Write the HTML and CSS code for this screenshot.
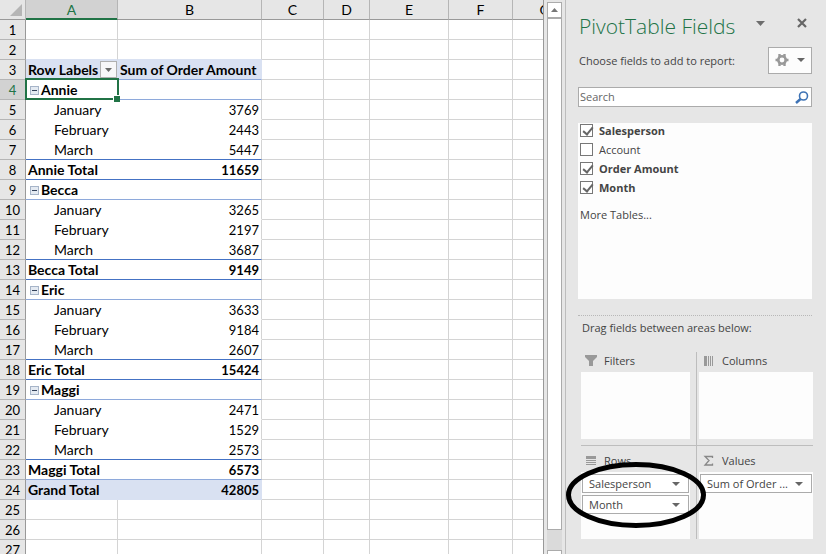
FILE: index.html
```html
<!DOCTYPE html>
<html lang="en">
<head>
<meta charset="utf-8">
<title>PivotTable Fields</title>
<link rel="stylesheet" href="styles.css">
</head>
<body>
<div class="app">
  <main class="sheet">
    <table class="grid">
      <colgroup>
        <col class="c-num"><col class="c-a"><col class="c-b"><col class="c-c"><col class="c-d"><col class="c-e"><col class="c-f"><col class="c-g">
      </colgroup>
      <thead>
        <tr>
          <th class="corner"><svg width="12" height="12" viewBox="0 0 12 12"><path d="M12 0V12H0Z" fill="#b5b5b5"/></svg></th>
          <th class="active">A</th><th>B</th><th>C</th><th>D</th><th>E</th><th>F</th><th>G</th>
        </tr>
      </thead>
      <tbody>
        <tr><th>1</th><td></td><td></td><td></td><td></td><td></td><td></td><td></td></tr>
        <tr class="above-head"><th>2</th><td></td><td></td><td></td><td></td><td></td><td></td><td></td></tr>
        <tr class="head"><th>3</th><td><div class="label-cell">Row Labels <button class="filter" aria-label="Filter row labels"><svg width="7" height="4" viewBox="0 0 7 4"><path d="M0 0H7L3.5 4Z" fill="#6b6b6b"/></svg></button></div></td><td>Sum of Order Amount</td><td></td><td></td><td></td><td></td><td></td></tr>
        <tr class="group"><th class="active">4</th><td class="selected"><button class="toggle" aria-label="Collapse"></button>Annie</td><td></td><td></td><td></td><td></td><td></td><td></td></tr>
        <tr class="item"><th>5</th><td>January</td><td>3769</td><td></td><td></td><td></td><td></td><td></td></tr>
        <tr class="item"><th>6</th><td>February</td><td>2443</td><td></td><td></td><td></td><td></td><td></td></tr>
        <tr class="item last"><th>7</th><td>March</td><td>5447</td><td></td><td></td><td></td><td></td><td></td></tr>
        <tr class="total"><th>8</th><td>Annie Total</td><td>11659</td><td></td><td></td><td></td><td></td><td></td></tr>
        <tr class="group"><th>9</th><td><button class="toggle" aria-label="Collapse"></button>Becca</td><td></td><td></td><td></td><td></td><td></td><td></td></tr>
        <tr class="item"><th>10</th><td>January</td><td>3265</td><td></td><td></td><td></td><td></td><td></td></tr>
        <tr class="item"><th>11</th><td>February</td><td>2197</td><td></td><td></td><td></td><td></td><td></td></tr>
        <tr class="item last"><th>12</th><td>March</td><td>3687</td><td></td><td></td><td></td><td></td><td></td></tr>
        <tr class="total"><th>13</th><td>Becca Total</td><td>9149</td><td></td><td></td><td></td><td></td><td></td></tr>
        <tr class="group"><th>14</th><td><button class="toggle" aria-label="Collapse"></button>Eric</td><td></td><td></td><td></td><td></td><td></td><td></td></tr>
        <tr class="item"><th>15</th><td>January</td><td>3633</td><td></td><td></td><td></td><td></td><td></td></tr>
        <tr class="item"><th>16</th><td>February</td><td>9184</td><td></td><td></td><td></td><td></td><td></td></tr>
        <tr class="item last"><th>17</th><td>March</td><td>2607</td><td></td><td></td><td></td><td></td><td></td></tr>
        <tr class="total"><th>18</th><td>Eric Total</td><td>15424</td><td></td><td></td><td></td><td></td><td></td></tr>
        <tr class="group"><th>19</th><td><button class="toggle" aria-label="Collapse"></button>Maggi</td><td></td><td></td><td></td><td></td><td></td><td></td></tr>
        <tr class="item"><th>20</th><td>January</td><td>2471</td><td></td><td></td><td></td><td></td><td></td></tr>
        <tr class="item"><th>21</th><td>February</td><td>1529</td><td></td><td></td><td></td><td></td><td></td></tr>
        <tr class="item last"><th>22</th><td>March</td><td>2573</td><td></td><td></td><td></td><td></td><td></td></tr>
        <tr class="total before-grand"><th>23</th><td>Maggi Total</td><td>6573</td><td></td><td></td><td></td><td></td><td></td></tr>
        <tr class="grand"><th>24</th><td>Grand Total</td><td>42805</td><td></td><td></td><td></td><td></td><td></td></tr>
        <tr><th>25</th><td></td><td></td><td></td><td></td><td></td><td></td><td></td></tr>
        <tr><th>26</th><td></td><td></td><td></td><td></td><td></td><td></td><td></td></tr>
        <tr><th>27</th><td></td><td></td><td></td><td></td><td></td><td></td><td></td></tr>
      </tbody>
    </table>
  </main>

  <div class="scroll">
    <button class="scroll-up" aria-label="Scroll up"><svg width="7" height="4" viewBox="0 0 7 4"><path d="M0 4L3.5 0L7 4Z" fill="#777"/></svg></button>
    <div class="thumb"></div>
    <div class="track"></div>
    <div class="scroll-down"></div>
  </div>

  <aside class="pane">
    <header class="pane-head">
      <h1>PivotTable Fields</h1>
      <button class="plain" aria-label="Pane options"><svg width="9" height="5" viewBox="0 0 9 5"><path d="M0 0H9L4.5 5Z" fill="#6d6d6d"/></svg></button>
      <button class="plain" aria-label="Close"><svg width="10" height="10" viewBox="0 0 10 10"><path d="M1 1L9 9M9 1L1 9" stroke="#666" stroke-width="2.2"/></svg></button>
    </header>
    <div class="choose">
      <p>Choose fields to add to report:</p>
      <button class="tools" aria-label="Tools">
        <svg width="14" height="14" viewBox="0 0 14 14"><circle cx="7" cy="7" r="3.7" fill="none" stroke="#999" stroke-width="2.6"/><path d="M4.5 1V4M9.5 1V4M4.5 10V13M9.5 10V13M0.5 7H3M11 7H13.5" stroke="#999" stroke-width="2.4"/></svg>
        <svg width="8" height="4" viewBox="0 0 8 4"><path d="M0 0H8L4 4Z" fill="#666"/></svg>
      </button>
    </div>
    <div class="search">
      <input type="text" placeholder="Search" aria-label="Search">
      <svg width="14" height="13" viewBox="0 0 14 13"><circle cx="8.5" cy="5" r="4" fill="none" stroke="#3e73b5" stroke-width="1.6"/><path d="M5.5 8L1 12" stroke="#3e73b5" stroke-width="2.4"/></svg>
    </div>
    <div class="fields">
      <label class="on"><input type="checkbox" checked>Salesperson</label>
      <label><input type="checkbox">Account</label>
      <label class="on"><input type="checkbox" checked>Order Amount</label>
      <label class="on"><input type="checkbox" checked>Month</label>
      <a href="#">More Tables...</a>
    </div>
    <p class="drag">Drag fields between areas below:</p>
    <div class="areas">
      <section class="area">
        <h2><svg width="12" height="12" viewBox="0 0 12 12"><path d="M0 0H12V2L8 6V11H4V6L0 2Z" fill="#999"/></svg>Filters</h2>
        <div class="drop"></div>
      </section>
      <section class="area">
        <h2><svg width="12" height="12" viewBox="0 0 12 12"><path d="M1 1H4V11H1ZM5 1H6V11H5ZM7 1H8V11H7ZM9 1H10V11H9Z" fill="#999"/></svg>Columns</h2>
        <div class="drop"></div>
      </section>
      <section class="area">
        <h2><svg width="12" height="12" viewBox="0 0 12 12"><path d="M1 1H11V4H1ZM1 5H11V6H1ZM1 7H11V8H1ZM1 9H11V10H1Z" fill="#999"/></svg>Rows</h2>
        <div class="drop">
          <button class="chip">Salesperson<svg width="8" height="4" viewBox="0 0 8 4"><path d="M0 0H8L4 4Z" fill="#666"/></svg></button>
          <button class="chip">Month<svg width="8" height="4" viewBox="0 0 8 4"><path d="M0 0H8L4 4Z" fill="#666"/></svg></button>
        </div>
      </section>
      <section class="area">
        <h2><svg width="12" height="12" viewBox="0 0 12 12"><path d="M9.5 3V1.5H2L6 5.5L2 10H9.5V8.5" fill="none" stroke="#888" stroke-width="1.3"/></svg>Values</h2>
        <div class="drop">
          <button class="chip">Sum of Order ...<svg width="8" height="4" viewBox="0 0 8 4"><path d="M0 0H8L4 4Z" fill="#666"/></svg></button>
        </div>
      </section>
      <svg class="ring" width="140" height="66" viewBox="0 0 140 66"><ellipse cx="70" cy="33" rx="67.5" ry="30.5" fill="none" stroke="#000" stroke-width="5"/></svg>
    </div>
  </aside>
</div>
</body>
</html>
```
FILE: styles.css
```css
* { box-sizing: border-box; }
body { margin: 0; background: #e6e6e6; color: #000; }
button { padding: 0; margin: 0; font: inherit; color: inherit; border-radius: 0; }
svg { display: block; flex: none; }
.app {
  display: grid;
  grid-template-columns: minmax(0, 1fr) 21px 261px;
  height: 100vh;
  overflow: hidden;
}

/* worksheet */
.sheet { overflow: hidden; border-right: 1px solid #999; background: #fff; }
.grid {
  table-layout: fixed;
  width: 577px;
  border-spacing: 0;
  font: 14px/19px Lato, "Liberation Sans", sans-serif;
}
.c-num { width: 26px; }
.c-a { width: 92px; }
.c-b { width: 144px; }
.c-c { width: 62px; }
.c-d { width: 46px; }
.c-e { width: 79px; }
.c-f, .c-g { width: 64px; }
.grid th, .grid td { height: 20px; padding: 0; white-space: nowrap; }
.grid th {
  background: #e6e6e6;
  font-weight: 400;
  border-right: 1px solid #999;
  border-bottom: 1px solid #b5b5b5;
}
.grid tbody th { padding-top: 2px; font-size: 13px; line-height: 17px; }
.grid thead th { border-right-color: #b5b5b5; border-bottom-color: #999; }
.grid th.active { background: #d2d2d2; color: #217346; }
.grid thead th.active { box-shadow: inset 0 -1px #217346; border-bottom-color: #217346; }
.grid .corner svg { margin-left: 10px; }
.grid td { border-right: 1px solid #d4d4d4; border-bottom: 1px solid #d4d4d4; }
.above-head td:nth-child(-n+3) { border-bottom-color: #d9e1f2; }
.head td:nth-child(-n+3), .grand td:nth-child(-n+3) {
  background: #d9e1f2;
  border-color: #d9e1f2;
  font-weight: 700;
}
.grid .head td:nth-child(-n+3) { padding-left: 2px; border-bottom-color: #8ea9db; }
.label-cell { display: flex; justify-content: space-between; align-items: center; height: 19px; }
.filter {
  display: flex; align-items: center; justify-content: center;
  width: 17px; height: 17px;
  margin-right: 1px;
  border: 1px solid #b0b0b0;
  background: #f7f7f9;
}
.group td:nth-child(2) { font-weight: 700; }
.group td:nth-child(-n+3) { border-bottom-color: #8ea9db; }
.grid :is(.head, .group, .item, .total, .grand) td:nth-child(2) { border-right: 0; }
.toggle {
  width: 9px; height: 9px;
  margin: 0 2px 0 4px;
  border: 1px solid #a6b4c8;
  background: linear-gradient(#33415a, #33415a) center / 5px 1px no-repeat #e4eaf2;
  vertical-align: 1px;
}
.grid td.selected { position: relative; }
.selected::before {
  content: "";
  position: absolute;
  inset: -2px -1px -1px -1px;
  border: 2px solid #217346;
}
.selected::after {
  content: "";
  position: absolute;
  right: -2px; bottom: -3px;
  width: 6px; height: 6px;
  background: #217346;
  border: solid #fff;
  border-width: 1px 0 0 1px;
}
.item td:nth-child(-n+3) { border-bottom-color: #fff; }
.grid .item td:nth-child(2) { padding-left: 28px; }
.grid :is(.item, .total, .grand) td:nth-child(3) {
  padding: 2px 2px 0 0;
  font-size: 13px;
  line-height: 17px;
  text-align: right;
}
.item.last td:nth-child(-n+3), .total td:nth-child(-n+3) { border-bottom-color: #4472c4; }
.total.before-grand td:nth-child(-n+3) { border-bottom-color: #8ea9db; }
.total td:nth-child(-n+3) { font-weight: 700; }
.grid .total td:nth-child(2), .grid .grand td:nth-child(2) { padding-left: 2px; }

/* scroll bar */
.scroll {
  display: grid;
  grid-template-rows: 16px minmax(0, 1fr) 20px 4px;
  padding: 2px 3px 0;
  height: 100vh;
}
.scroll > * { border: 1px solid #ababab; background: #fff; }
.scroll .track { background: #dadada; border: 0; }
.scroll-up { display: flex; align-items: center; justify-content: center; }
.scroll .scroll-down { border-bottom: 0; }

/* field pane */
.pane {
  border-left: 1px solid #bdbdbd;
  padding: 0 14px 0 12px;
  font: 11px/16px "Open Sans", "Noto Sans", sans-serif;
  color: #444;
}
.pane p, .pane h1, .pane h2 { margin: 0; font-weight: 400; }
.pane-head { display: flex; align-items: center; height: 46px; gap: 32px; padding: 0 5px 0 1px; }
.pane-head h1 {
  flex: 1;
  min-width: 0;
  padding-top: 6px;
  font: 300 21px/28px "Open Sans", "Noto Sans", sans-serif;
  color: #217346;
  white-space: nowrap;
}
.plain { border: 0; background: none; }
.choose { display: flex; align-items: center; justify-content: space-between; height: 28px; }
.choose p { padding: 2px 0 0 1px; }
.tools {
  display: flex; align-items: center; justify-content: center; gap: 8px;
  width: 44px; height: 27px;
  border: 1px solid #ababab;
  background: #fdfdfd;
}
.search {
  display: flex; align-items: center;
  height: 20px;
  margin-top: 13px;
  padding-right: 2px;
  border: 1px solid #ababab;
  background: #fff;
}
.search input {
  flex: 1; min-width: 0;
  padding: 0 1px;
  border: 0; outline: 0;
  background: none;
  font: inherit;
}
.search input::placeholder { color: #666; }
.fields {
  display: flex; flex-direction: column;
  height: 176px;
  margin-top: 16px;
  padding: 0 2px;
  background: #fdfdfd;
}
.fields label { display: flex; align-items: flex-start; gap: 6px; height: 19px; }
.fields .on { font-weight: 700; }
.fields input {
  appearance: none;
  position: relative;
  width: 13px; height: 13px;
  margin: 1px 0 0;
  border: 1px solid #777;
  background: #fff;
}
.fields input:checked::before {
  content: "";
  position: absolute;
  left: 4px; top: 0;
  width: 4px; height: 8px;
  border: solid #666;
  border-width: 0 2px 2px 0;
  transform: rotate(40deg);
}
.fields a { margin-top: 8px; color: #444; text-decoration: none; }
.pane .drag { margin-top: 16px; padding: 4px 0 0 4px; border-top: 1px dotted #b8b8b8; }
.areas {
  position: relative;
  display: grid;
  grid-template-columns: 115px minmax(0, 1fr);
  margin: 16px -1px 0 3px;
}
.area { padding: 0 6px 6px 0; border-bottom: 1px solid #bdbdbd; }
.area:nth-child(even) { padding: 0 0 6px 2px; border-left: 1px solid #bdbdbd; }
.area:nth-child(n+3) { border-bottom: 0; padding-top: 6px; padding-bottom: 0; }
.area h2 {
  display: flex; align-items: center; gap: 7px;
  height: 20px;
  padding: 0 0 3px 4px;
  font-size: 11px;
}
.drop { height: 67px; padding: 2px 1px; background: #fdfdfd; }
.chip {
  display: flex; align-items: center; justify-content: space-between;
  width: 100%; height: 19px;
  margin-bottom: 2px;
  padding: 0 8px 0 6px;
  border: 1px solid #ababab;
  background: #fff;
  white-space: nowrap;
}
.ring { position: absolute; left: -15px; top: 110px; pointer-events: none; }
```
